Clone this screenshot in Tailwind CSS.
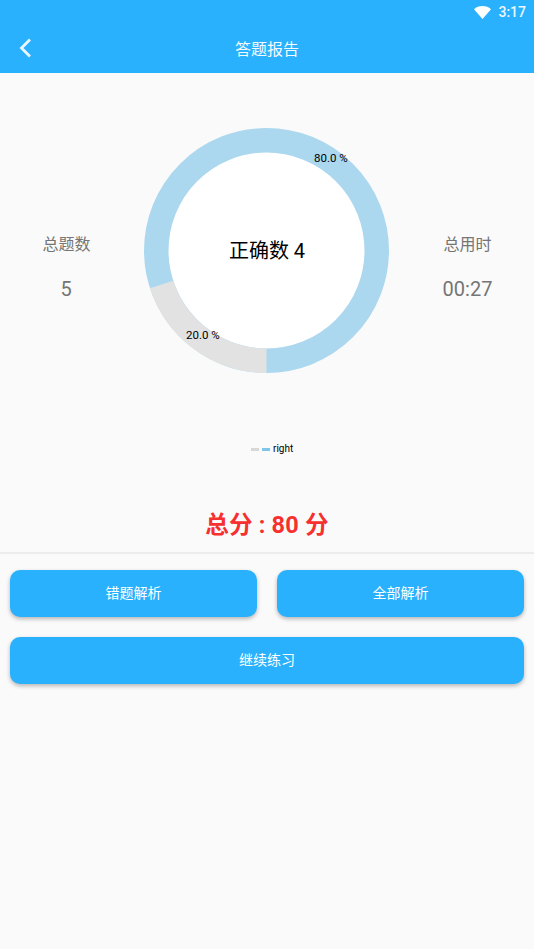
<!DOCTYPE html>
<html lang="zh">
<head>
<meta charset="utf-8">
<script src="https://cdn.jsdelivr.net/npm/@tailwindcss/browser@4"></script>
</head>
<body class="m-0">
<div class="w-[534px] h-[949px] bg-[#fafafa] flex flex-col overflow-hidden font-['Roboto','Noto_Sans_CJK_SC',sans-serif]">
  <header class="h-[73px] bg-[#29b1fe] flex flex-col shrink-0">
    <div class="h-[24px] flex items-center justify-end gap-[7px] pr-[8px] text-white text-[14px] font-medium">
      <svg class="w-[17px] h-[13px]" viewBox="0 0 17 13"><path d="M0 3.2C2.2 1.2 5.2 0 8.5 0s6.3 1.2 8.500 3.200L8.500 13z" fill="#fff"/></svg>
      <span class="opacity-90">3:17</span>
    </div>
    <div class="relative flex-1 flex items-center justify-center text-white text-[16px] pt-[2px]">
      <svg class="absolute left-[17px] top-[13px] w-[16px] h-[22px]" viewBox="0 0 16 22" fill="none"><path d="M13 2.500 4.500 11 13 19.500" stroke="#e8f6ff" stroke-width="2.800"/></svg>
      <span class="opacity-95">答题报告</span>
    </div>
  </header>

  <section class="h-[390px] flex items-start shrink-0">
    <div class="w-[133px] pt-[160px] flex flex-col items-center text-[#757575]">
      <span class="text-[16px] leading-[24px]">总题数</span>
      <span class="text-[20px] leading-[24px] mt-[20px] pr-[1px]">5</span>
    </div>
    <div class="relative w-[268px] h-[390px] shrink-0">
      <svg class="absolute left-[11px] top-[55px] w-[245px] h-[245px]" viewBox="0 0 245 245" fill="none">
        <circle cx="122.500" cy="122.500" r="98" fill="#fff"/>
        <circle cx="122.500" cy="122.500" r="110.250" stroke="#abd8ef" stroke-width="24.500"/>
        <circle cx="122.500" cy="122.500" r="110.250" stroke="#e2e2e2" stroke-width="24.500" pathLength="100" stroke-dasharray="20 80" stroke-dashoffset="-50" transform="rotate(-90 122.500 122.500)"/>
      </svg>
      <span class="absolute left-0 right-0 top-[163px] text-center text-[20px] leading-[30px] text-black">正确数 4</span>
      <span class="absolute left-[181px] top-[78px] text-[11.500px] leading-[14px] text-black">80.0 %</span>
      <span class="absolute left-[53px] top-[255px] text-[11.500px] leading-[14px] text-black">20.0 %</span>
      <div class="absolute left-[118px] top-[369px] flex items-center text-[10px] leading-[14px] text-black">
        <span class="w-[8px] h-[3px] bg-[#d8d8d8]"></span>
        <span class="w-[8px] h-[3px] bg-[#7fc4ea] ml-[3px]"></span>
        <span class="ml-[3px]">right</span>
      </div>
    </div>
    <div class="flex-1 pt-[160px] flex flex-col items-center text-[#757575]">
      <span class="text-[16px] leading-[24px]">总用时</span>
      <span class="text-[20px] leading-[24px] mt-[20px]">00:27</span>
    </div>
  </section>

  <div class="h-[91px] shrink-0 border-b-2 border-[#ececec] flex justify-center pt-[44px]">
    <span class="text-[23.500px] leading-[36px] font-bold tracking-[0.2px] text-[#f5302e]">总分 : 80 分</span>
  </div>

  <div class="px-[10px] pt-[16px] flex flex-col gap-[20px]">
    <div class="flex gap-[20px]">
      <button class="flex-1 h-[47px] rounded-[10px] bg-[#29b1fe] text-white text-[14px] shadow-[0_2px_4px_rgba(0,0,0,0.28)]">错题解析</button>
      <button class="flex-1 h-[47px] rounded-[10px] bg-[#29b1fe] text-white text-[14px] shadow-[0_2px_4px_rgba(0,0,0,0.28)]">全部解析</button>
    </div>
    <button class="h-[47px] rounded-[10px] bg-[#29b1fe] text-white text-[14px] shadow-[0_2px_4px_rgba(0,0,0,0.28)]">继续练习</button>
  </div>
</div>
</body>
</html>
